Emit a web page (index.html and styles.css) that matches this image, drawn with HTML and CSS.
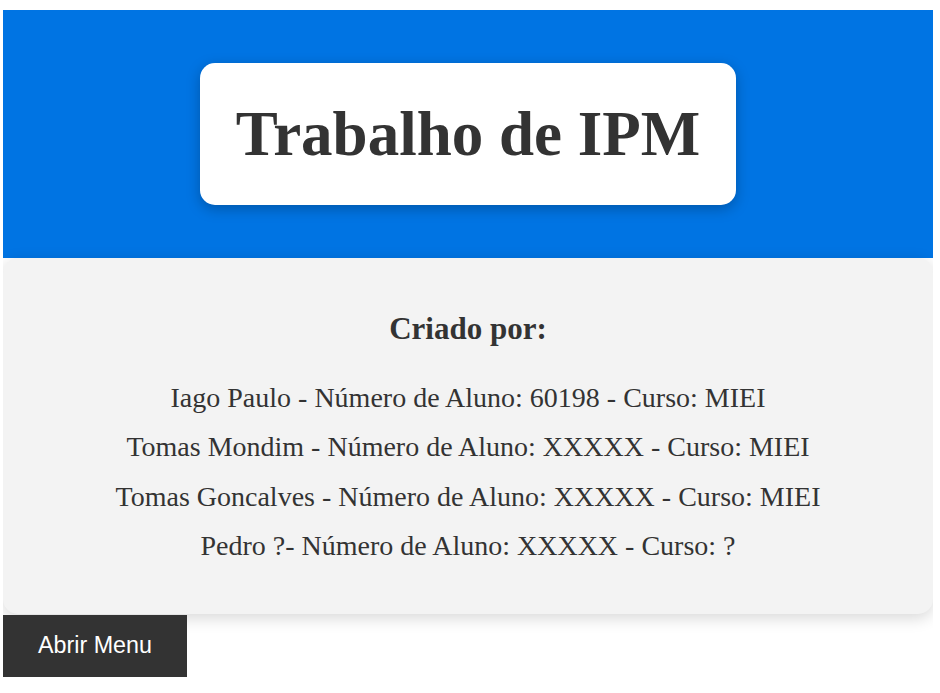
FILE: index.html
```html
<!DOCTYPE html>
<html lang="pt">
<head>
<meta charset="utf-8">
<title>Trabalho de IPM</title>
<link rel="stylesheet" href="styles.css">
</head>
<body>
<header class="hero">
  <div class="title-box"><h1 class="title">Trabalho de IPM</h1></div>
</header>
<section class="credits">
  <h2 class="credits-title">Criado por:</h2>
  <p class="credit">Iago Paulo - Número de Aluno: 60198 - Curso: MIEI</p>
  <p class="credit">Tomas Mondim - Número de Aluno: XXXXX - Curso: MIEI</p>
  <p class="credit">Tomas Goncalves - Número de Aluno: XXXXX - Curso: MIEI</p>
  <p class="credit">Pedro ?- Número de Aluno: XXXXX - Curso: ?</p>
</section>
<button class="menu-btn" type="button">Abrir Menu</button>
</body>
</html>
```
FILE: styles.css
```css
html, body {
  background: #ffffff;
}
body {
  margin: 10px 7px 0 3px;
  font-family: "Liberation Serif", "Times New Roman", serif;
  color: #333333;
}
.hero {
  height: 248px;
  background: #0074e3;
  display: flex;
  align-items: center;
  justify-content: center;
}
.title-box {
  height: 142px;
  padding: 0 36px;
  background: #ffffff;
  border-radius: 15px;
  box-shadow: 0 4px 14px rgba(0, 0, 0, 0.25);
  display: flex;
  align-items: center;
}
.title {
  margin: 0;
  font-size: 63px;
  font-weight: bold;
  line-height: 1.15;
  color: #333333;
}
.credits {
  position: relative;
  background: #f3f3f3;
  border-radius: 15px;
  box-shadow: 0 4px 16px rgba(0, 0, 0, 0.16);
  padding: 53px 0 43px;
  text-align: center;
}
.credits-title {
  margin: 0 0 26px;
  font-size: 31px;
  font-weight: bold;
  line-height: 1.15;
}
.credit {
  margin: 0;
  font-size: 28px;
  line-height: 49.5px;
}
.menu-btn {
  display: flex;
  align-items: center;
  justify-content: center;
  position: relative;
  margin-top: 1px;
  width: 184px;
  height: 62px;
  padding: 0;
  border: none;
  background: #333333;
  color: #ffffff;
  font-family: "Liberation Sans", Arial, sans-serif;
  font-size: 23.3px;
}
```
